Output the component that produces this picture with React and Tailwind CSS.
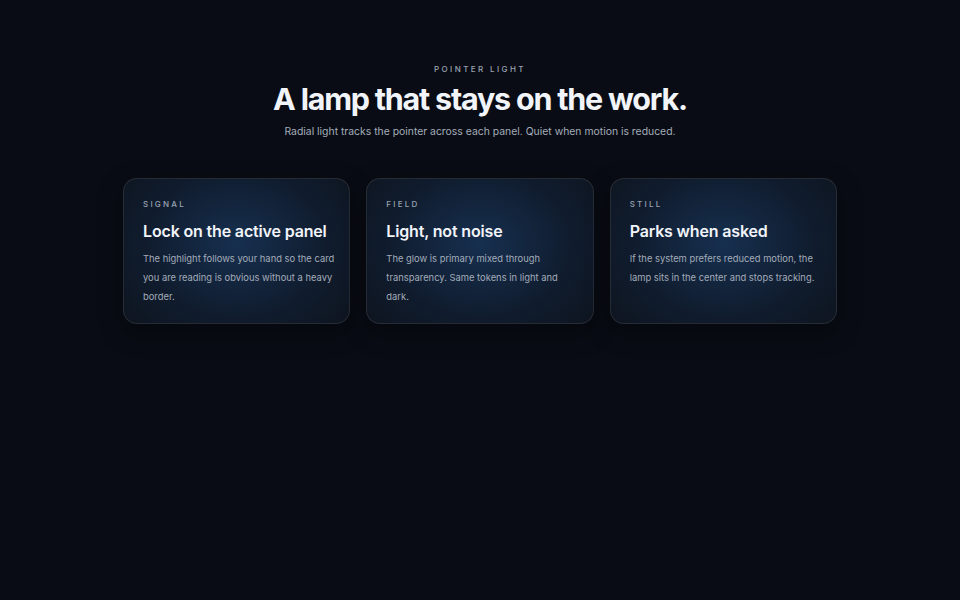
import React from 'react'

const cards = [
  {
    label: 'SIGNAL',
    title: 'Lock on the active panel',
    body: 'The highlight follows your hand so the card you are reading is obvious without a heavy border.',
  },
  {
    label: 'FIELD',
    title: 'Light, not noise',
    body: 'The glow is primary mixed through transparency. Same tokens in light and dark.',
  },
  {
    label: 'STILL',
    title: 'Parks when asked',
    body: 'If the system prefers reduced motion, the lamp sits in the center and stops tracking.',
  },
]

function LampCard({ label, title, body }) {
  return (
    <div className="relative h-[146px] overflow-hidden rounded-[14px] border border-white/10 bg-[#0e141e] shadow-[0_8px_24px_rgba(0,0,0,0.35)]">
      {/* lamp glow */}
      <div className="pointer-events-none absolute inset-0 bg-[radial-gradient(ellipse_75%_95%_at_50%_45%,rgba(28,66,112,0.6),rgba(20,45,80,0.3)_55%,rgba(14,20,30,0)_92%)]" />
      <div className="relative pl-[19px] pr-[11px] pt-[19px]">
        <div className="text-[8px] font-medium tracking-[0.28em] text-[#9aa3b2]">{label}</div>
        <h3 className="mt-[9px] text-[16px] font-semibold tracking-[-0.01em] text-[#f1f4f8]">{title}</h3>
        <p className="mt-[6px] text-[9.4px] leading-[19px] text-[#a3acba]">{body}</p>
      </div>
    </div>
  )
}

export default function App() {
  return (
    <div className="min-h-[600px] w-full bg-[#090c14] font-['Inter',sans-serif]">
      <div className="flex flex-col items-center pt-[63px]">
        <div className="text-[8px] font-medium tracking-[0.3em] text-[#9aa3b2]">POINTER LIGHT</div>
        <h1 className="mt-[4px] text-[30.5px] font-bold leading-[40px] tracking-[-0.04em] text-[#f1f4f8]">
          A lamp that stays on the work.
        </h1>
        <p className="mt-[5px] text-[10.4px] text-[#a3acba]">
          Radial light tracks the pointer across each panel. Quiet when motion is reduced.
        </p>
      </div>
      <div className="mx-auto mt-[38px] grid w-[714px] grid-cols-3 gap-[16px]">
        {cards.map((c) => (
          <LampCard key={c.label} {...c} />
        ))}
      </div>
    </div>
  )
}
